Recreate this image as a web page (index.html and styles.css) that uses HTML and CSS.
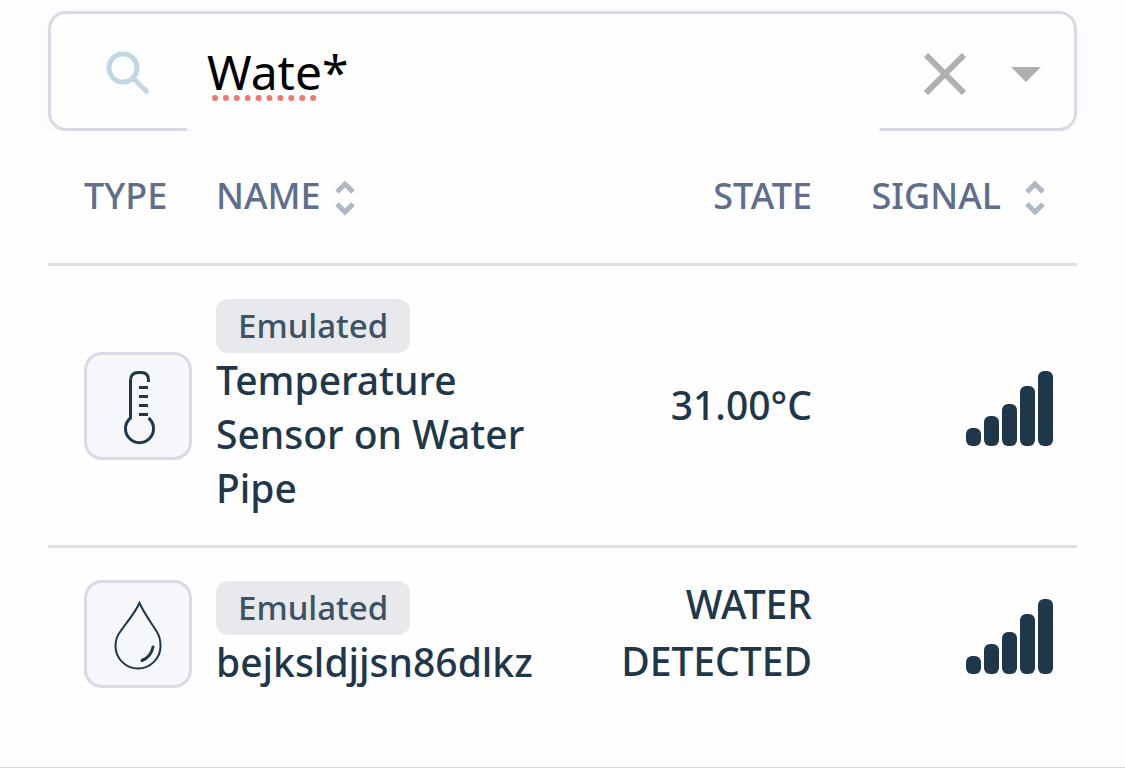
FILE: index.html
```html
<!DOCTYPE html>
<html lang="en">
<head>
    <meta charset="UTF-8">
    <meta name="viewport" content="width=device-width, initial-scale=1.0">
    <title>Devices</title>
    <link rel="stylesheet" href="styles.css">
</head>
<body>
    <div class="panel">
        <header class="search">
            <form class="search-box" role="search">
                <svg class="search-icon" viewBox="0 0 44 44" aria-hidden="true">
                    <circle cx="17" cy="17" r="14"/>
                    <path d="M28 28 L42 42"/>
                </svg>
                <div class="search-field">
                    <input type="text" class="search-input" value="Wate*" aria-label="Search devices" spellcheck="false">
                    <svg class="spelling" viewBox="0 0 106 8" aria-hidden="true">
                        <path d="M4 4 H103"/>
                    </svg>
                </div>
                <button type="button" class="icon-button clear" aria-label="Clear search">
                    <svg viewBox="0 0 42 42"><path d="M2 2 L40 40 M40 2 L2 40"/></svg>
                </button>
                <button type="button" class="icon-button caret" aria-label="Show filters">
                    <svg viewBox="0 0 30 15"><path d="M0 0 H30 L15 15 Z"/></svg>
                </button>
            </form>
        </header>

        <table class="devices">
            <thead>
                <tr>
                    <th class="type">TYPE</th>
                    <th class="name">
                        <button type="button" class="sort">NAME
                            <svg viewBox="0 0 20 36" aria-hidden="true"><path d="M2 12 L10 4 L18 12 M2 24 L10 32 L18 24"/></svg>
                        </button>
                    </th>
                    <th class="state">STATE</th>
                    <th class="signal">
                        <button type="button" class="sort sort-wide">SIGNAL
                            <svg viewBox="0 0 20 36" aria-hidden="true"><path d="M2 12 L10 4 L18 12 M2 24 L10 32 L18 24"/></svg>
                        </button>
                    </th>
                </tr>
            </thead>
            <tbody>
                <tr>
                    <td class="type">
                        <div class="type-icon">
                            <svg viewBox="0 0 102 102" role="img" aria-label="Temperature sensor">
                                <path d="M61.5 27 V25 Q61.5 17.5 54 17.5 H51.5 Q43.5 17.5 43.5 25.5 V63 A14 14 0 1 0 61.5 63"/>
                                <path d="M52 32.5 H61 M52 41.5 H61 M52 50.5 H61 M52 59.5 H61"/>
                            </svg>
                        </div>
                    </td>
                    <td class="name">
                        <span class="badge">Emulated</span>
                        Temperature Sensor on Water Pipe
                    </td>
                    <td class="state">31.00°C</td>
                    <td class="signal">
                        <svg class="bars" viewBox="0 0 87 75" role="img" aria-label="Full signal">
                            <rect x="0" y="57" width="15" height="18" rx="6"/>
                            <rect x="18" y="45" width="15" height="30" rx="6"/>
                            <rect x="36" y="33" width="15" height="42" rx="6"/>
                            <rect x="54" y="15" width="15" height="60" rx="6"/>
                            <rect x="72" y="0" width="15" height="75" rx="6"/>
                        </svg>
                    </td>
                </tr>
                <tr>
                    <td class="type">
                        <div class="type-icon">
                            <svg viewBox="0 0 102 102" role="img" aria-label="Water sensor">
                                <path class="drop" d="M52.5 20 C48 30 40 39 33 49 C30 53 28.5 57 28.5 63 A22.5 22.5 0 0 0 73.5 63 C73.5 57 72.5 53 70 49 C63 38 57 30 52.5 20 Z"/>
                                <path class="shine" d="M66 64 Q64 74 55 77.5"/>
                            </svg>
                        </div>
                    </td>
                    <td class="name">
                        <span class="badge">Emulated</span>
                        bejksldjjsn86dlkz
                    </td>
                    <td class="state">WATER DETECTED</td>
                    <td class="signal">
                        <svg class="bars" viewBox="0 0 87 75" role="img" aria-label="Full signal">
                            <rect x="0" y="57" width="15" height="18" rx="6"/>
                            <rect x="18" y="45" width="15" height="30" rx="6"/>
                            <rect x="36" y="33" width="15" height="42" rx="6"/>
                            <rect x="54" y="15" width="15" height="60" rx="6"/>
                            <rect x="72" y="0" width="15" height="75" rx="6"/>
                        </svg>
                    </td>
                </tr>
            </tbody>
        </table>
    </div>
</body>
</html>
```
FILE: styles.css
```css
* {
    box-sizing: border-box;
}

body {
    margin: 0;
    background-color: #fefefe;
    color: #1f374a;
    font-family: "Noto Sans", "Open Sans", sans-serif;
}

.panel {
    min-height: 100vh;
    border-bottom: 1px solid #dadae6;
}

/* Search */
.search {
    padding: 11px 48px 0;
    overflow: hidden;
}

.search-box {
    display: flex;
    align-items: center;
    height: 120px;
    padding: 0 33px 0 55px;
    border: 3px solid #dadae6;
    border-radius: 18px;
    background-color: #fefefe;
    box-shadow: 0 3px 18px rgba(0, 0, 0, 0.04);
}

.search-icon {
    flex: none;
    width: 44px;
    height: 44px;
    margin-top: 4px;
    margin-right: 37px;
    fill: none;
    stroke: #c1d8e4;
    stroke-width: 5;
}

.search-field {
    position: relative;
    flex: 1;
    align-self: stretch;
    min-width: 0;
    margin-right: 44px;
    margin-bottom: -3px;
}

.search-input {
    display: block;
    width: 100%;
    height: 100%;
    padding: 0 20px 2px;
    border: 0;
    border-radius: 3px;
    outline: none;
    background-color: #fefefe;
    color: #000000;
    font-family: inherit;
    font-size: 48px;
}

.spelling {
    position: absolute;
    left: 24px;
    top: 80px;
    width: 106px;
    height: 8px;
    fill: none;
    stroke: #f0776c;
    stroke-width: 6;
    stroke-linecap: round;
    stroke-dasharray: 0 10.9;
}

.icon-button {
    flex: none;
    display: flex;
    margin-top: 6px;
    padding: 0;
    border: 0;
    background: none;
    cursor: pointer;
}

.clear {
    margin-right: 45px;
}

.clear svg {
    width: 42px;
    height: 42px;
    stroke: #b0b0b0;
    stroke-width: 6;
}

.caret svg {
    width: 30px;
    height: 15px;
    fill: #b0b0b0;
}

/* Device table */
.devices {
    width: calc(100% - 96px);
    margin: 0 48px;
    border-spacing: 0;
    table-layout: fixed;
}

th {
    height: 135px;
    padding: 0 12px 4px;
    border-bottom: 3px solid #e0e0e0;
    color: #5f6e8c;
    font-size: 36px;
    font-weight: 500;
    text-align: left;
}

td {
    padding: 0 12px;
    font-size: 39px;
    font-weight: 500;
    line-height: 54px;
}

tbody tr:not(:last-child) td {
    border-bottom: 3px solid #e0e0e0;
}

.type {
    width: 156px;
    padding-left: 36px;
}

td.name {
    padding-top: 33px;
    padding-bottom: 30px;
}

.state {
    width: 250px;
    text-align: right;
}

td.state {
    padding-bottom: 3px;
    line-height: 57px;
}

.signal {
    width: 253px;
    padding-right: 24px;
    text-align: right;
}

td.signal {
    padding-top: 6px;
}

.sort {
    display: inline-flex;
    align-items: center;
    gap: 14px;
    padding: 0;
    border: 0;
    background: none;
    color: inherit;
    font: inherit;
    cursor: pointer;
}

.sort-wide {
    gap: 24px;
    margin-right: 8px;
}

.sort svg {
    width: 20px;
    height: 36px;
    margin-top: 6px;
    fill: none;
    stroke: #b0b8c6;
    stroke-width: 5;
}

.type-icon {
    width: 108px;
    height: 108px;
    border: 3px solid #dadae6;
    border-radius: 18px;
    background-color: #f6f7fb;
}

.type-icon svg {
    display: block;
    fill: none;
    stroke: #1f374a;
    stroke-width: 3;
}

.type-icon .drop {
    stroke-width: 2;
}

.type-icon .shine {
    stroke-linecap: round;
}

.badge {
    display: block;
    width: fit-content;
    padding: 0 22px;
    border-radius: 12px;
    background-color: #e8e9ec;
    color: #3b5365;
    font-size: 33px;
}

.bars {
    display: inline-block;
    width: 87px;
    height: 75px;
    vertical-align: middle;
    fill: #1f374a;
}
```
